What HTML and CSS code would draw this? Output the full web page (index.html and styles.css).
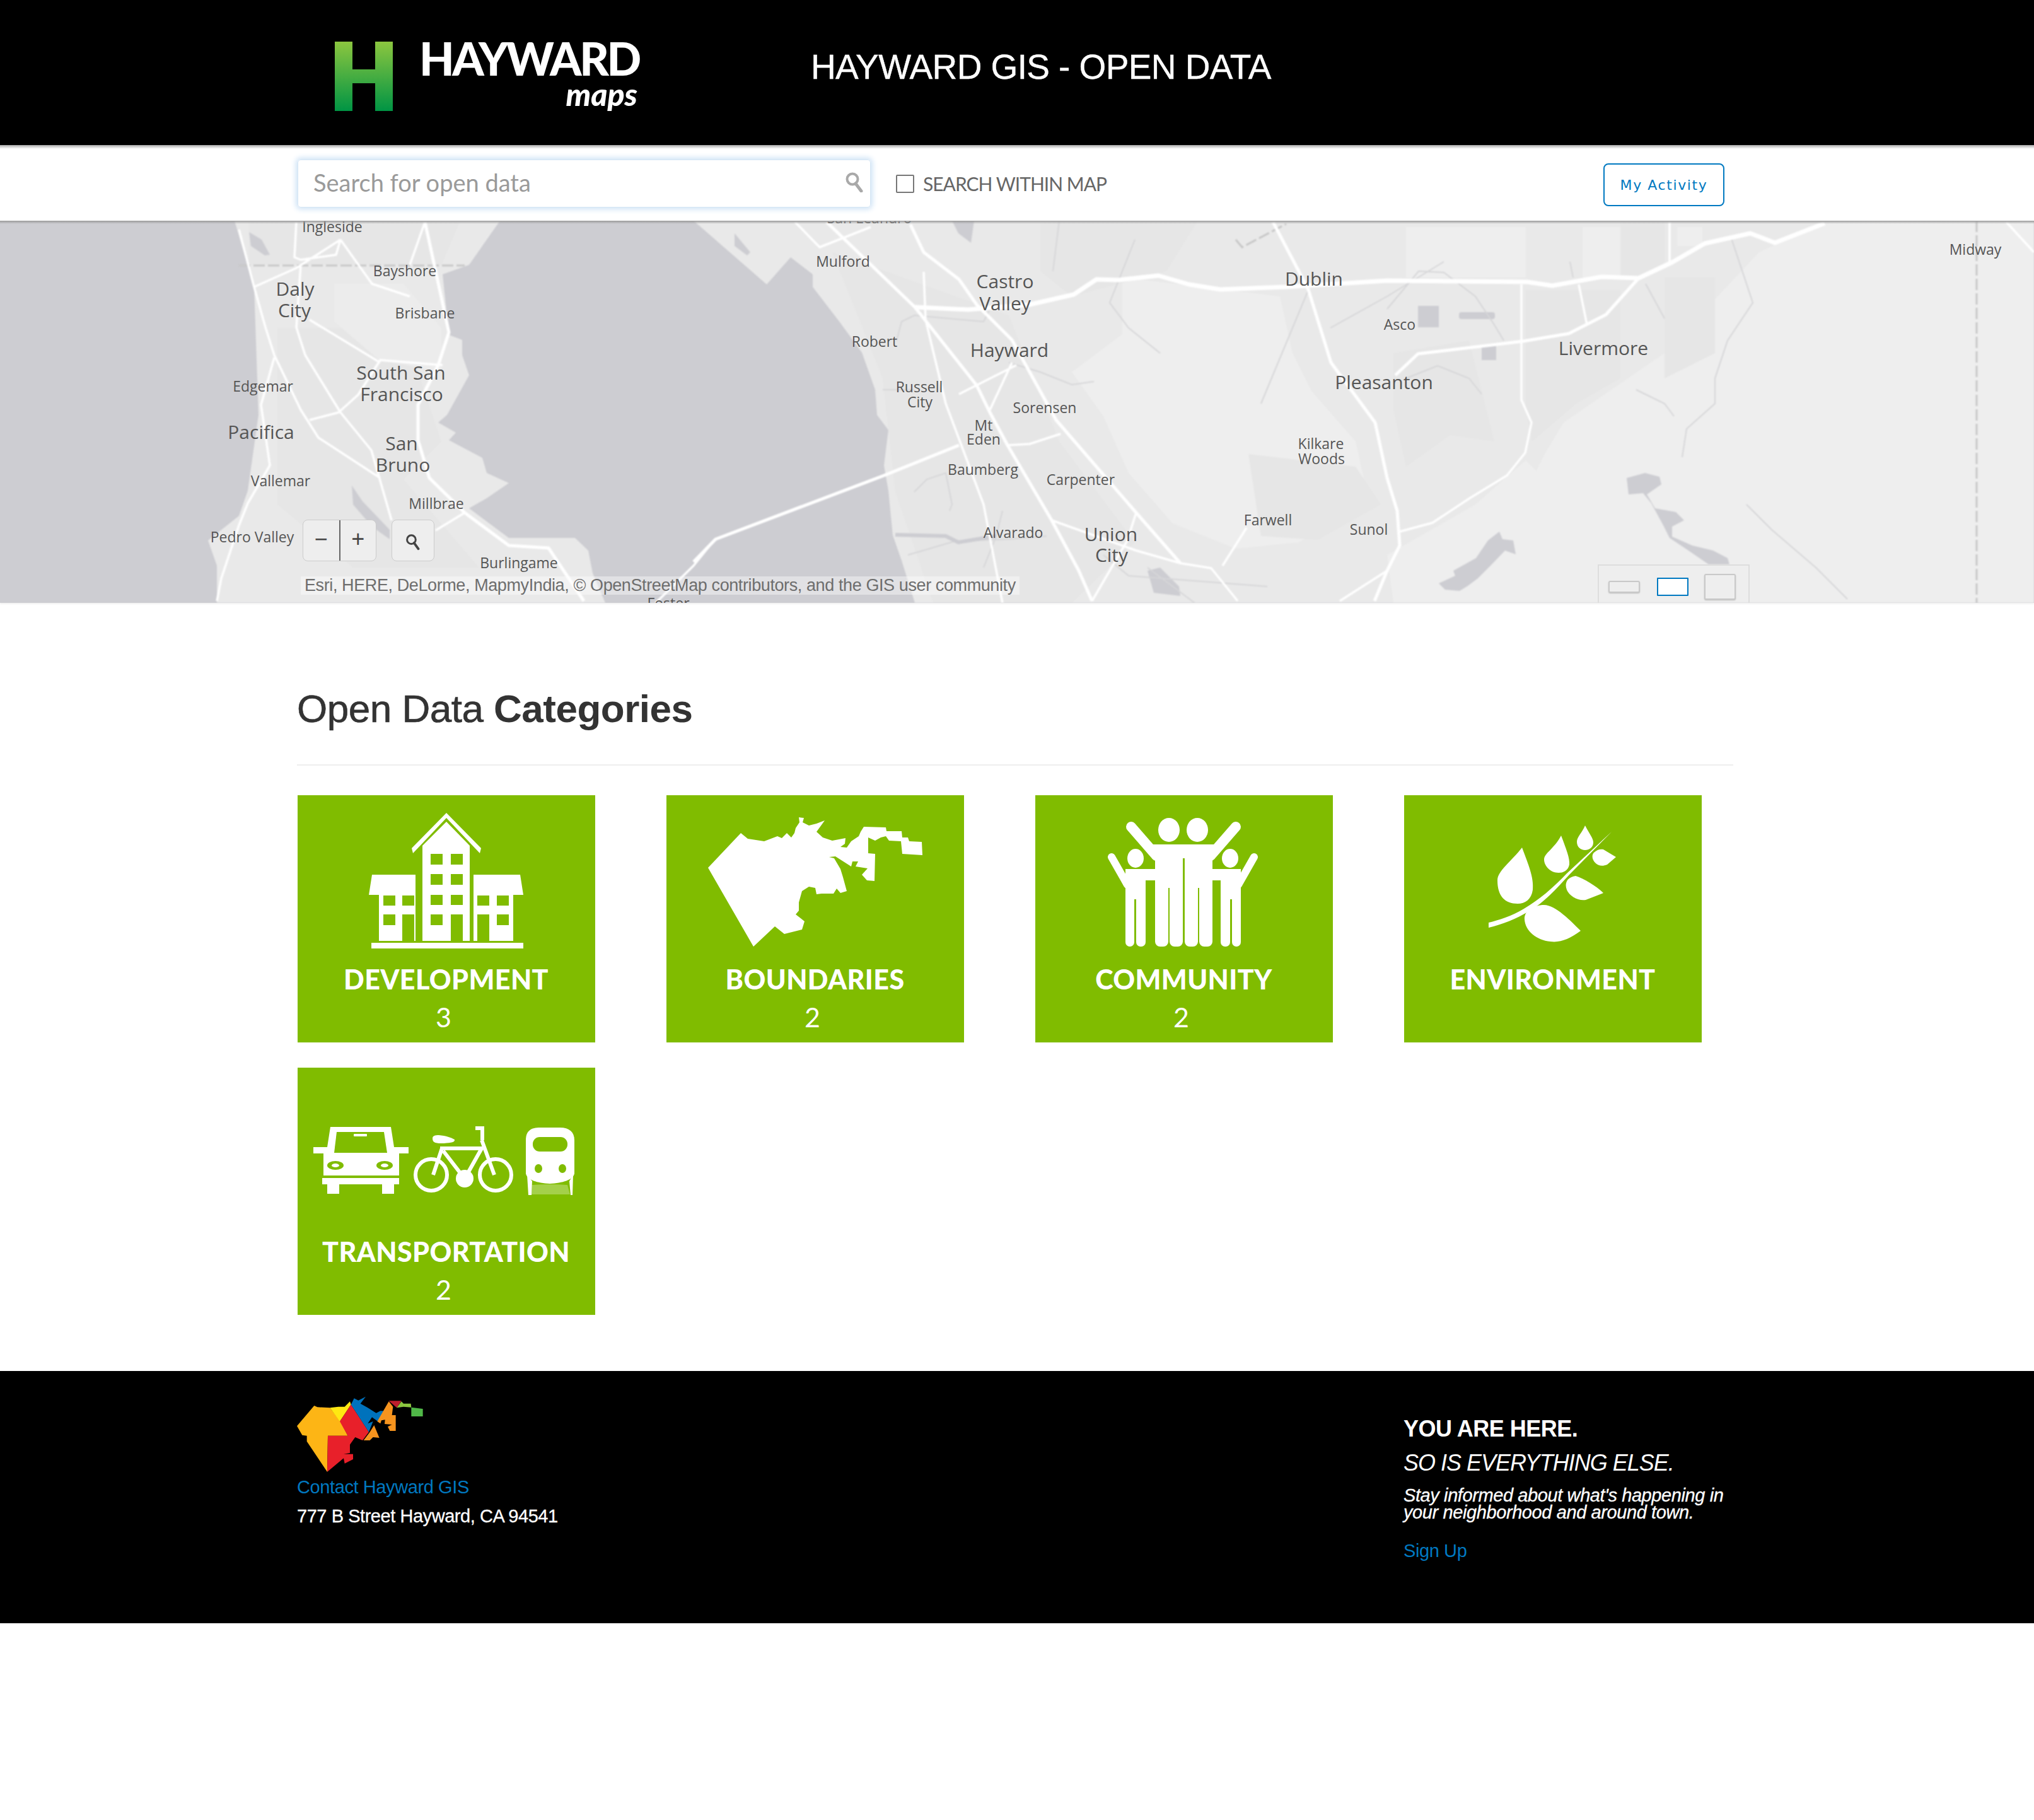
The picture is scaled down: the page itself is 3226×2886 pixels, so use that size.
FILE: index.html
```html
<!DOCTYPE html>
<html lang="en">
<head>
<meta charset="utf-8">
<title>Hayward GIS - Open Data</title>
<link rel="stylesheet" href="styles.css">
</head>
<body>
<header class="topbar">
  <div class="topbar-inner">
    <a class="logo">
      <svg class="logo-h" viewBox="0 0 92 110">
        <defs><linearGradient id="hgrad" x1="0" y1="0" x2="0" y2="1"><stop offset="0" stop-color="#8cc63f"/><stop offset="1" stop-color="#009444"/></linearGradient></defs>
        <path fill="url(#hgrad)" d="M0 0H28V44H64V0H92V110H64V66H28V110H0Z"/>
      </svg>
      <div class="logo-text"><div class="logo-name">HAYWARD</div><div class="logo-sub">maps</div></div>
    </a>
    <h1 class="site-title">HAYWARD GIS - OPEN DATA</h1>
  </div>
</header>

<div class="searchbar">
  <div class="searchbar-inner">
    <div class="searchbox">
      <span class="placeholder">Search for open data</span>
      <svg class="search-icon" viewBox="0 0 28 32"><circle cx="11" cy="11" r="8.5" fill="none" stroke="#a9a9a9" stroke-width="4"/><path d="M16 18L25 30" stroke="#a9a9a9" stroke-width="5" stroke-linecap="round"/></svg>
    </div>
    <label class="within"><span class="checkbox"></span><span>SEARCH WITHIN MAP</span></label>
    <a class="activity">My Activity</a>
  </div>
</div>

<section class="map">
  <svg class="map-canvas" viewBox="0 350 3226 606" preserveAspectRatio="none">
    <rect class="water" x="0" y="350" width="3226" height="606"/>
    <g class="soft">
    <!-- land -->
    <path class="land" d="M372 350L403 455L410 658L393 778L379 818L330 857L344 897L344 956H960L940 909L933 873L912 853H807L744 806L772 790L807 766L772 750L765 726L712 698L723 686L695 670L709 658L744 595L733 563L733 539L712 531L702 435L744 420L793 350Z"/>
    <path class="land" d="M1100 350L1216 451L1254 408L1289 435L1289 455L1332 511L1367 559L1388 618L1391 658L1409 682L1402 738L1409 778L1416 849L1430 889L1451 956H3226V350Z"/>
    <!-- tones -->
    <path class="land-light" d="M1780 440L2030 470L2050 560L2080 620L2150 700L2170 790L2060 860L1960 870L1860 830L1790 750L1750 660L1700 590L1780 530Z"/>
    <path class="land-light" d="M2480 670L2640 560L2790 400L2900 350H3226V956H2300L2400 820L2450 720Z"/>
    <path class="land-light" d="M2200 880L2340 800L2420 730L2470 780L2330 956H2210Z"/>
    <path class="land-light" d="M2230 360H2420V440H2230ZM2510 360H2570V440H2510ZM2660 360H2700V390H2660Z"/>
    <path class="land-dark" d="M2570 350H2640V416L2600 440L2570 440Z"/>
    <path class="land-dark" d="M2420 460H2570V600L2500 640L2430 700L2420 650Z"/>
    <path class="land-dark" d="M2640 440H2720V560L2640 600Z"/>
    <path class="land-dark" d="M2210 560L2330 540L2370 700L2300 690L2230 740L2210 650Z"/>
    <path class="land-dark" d="M1650 350H1900L1850 430L1700 470L1650 430Z"/>
    <path class="land-dark" d="M1980 720L2150 740L2190 800L2090 856L2000 850Z"/>
    <path class="land-dark" d="M1320 400L1600 500L1680 700L1800 860L1700 956H1480L1420 780L1400 600Z"/>
    <path class="land-dark" d="M440 520L640 520L700 700L640 760L760 900L560 900L440 800Z"/>
    <path class="land-dark" d="M395 350H730L700 420H395Z"/>
    <path class="land-lighter" d="M530 450L640 450L700 520L700 590L600 570L530 510Z"/>
    <!-- lakes -->
    <path class="lake" d="M2580 758L2609 750L2632 756L2635 768L2612 784L2625 806L2658 812L2671 825L2652 835L2652 851L2684 865L2717 873L2740 885L2743 895H2710L2678 873L2648 853L2638 833L2619 798L2606 782L2583 784Z"/>
    <path class="lake" d="M2282 925L2308 913L2305 905L2341 885L2360 857L2378 843L2383 855L2400 857L2404 879L2387 873L2364 897L2344 917L2328 929L2315 937L2292 935Z"/>
    <path class="lake" d="M2249 485H2282V519H2249ZM2350 549H2373V571H2350Z"/>
    <rect class="lake" x="2314" y="495" width="57" height="11" rx="4"/>
    <path class="lake" d="M1820 905L1840 900L1870 930L1872 945L1830 940Z"/>
    <path class="lake" d="M1165 370L1190 400L1185 405L1165 390Z"/>
    <path class="lake" d="M395 368L415 380L428 404L420 405L398 390ZM1510 350L1545 350L1540 385L1520 370Z"/>
    <path class="lake" d="M558 770L575 795L618 840L618 855L590 835L560 800Z"/>
    <!-- creeks -->
    <path class="creek" d="M1400 618H1450M1422 540L1430 510L1450 500L1560 510L1570 490M1600 575L1650 590L1700 610L1735 605M1800 380L1760 480L1790 520L1840 560M1680 350L1670 430M1440 880L1515 858L1600 855L1660 850M1820 900L1900 960M1450 780L1470 760L1500 750L1510 800L1506 810M1590 810L1580 850L1560 900M2000 640L2075 460M2110 520L2200 470L2290 415M2200 490L2250 430L2290 432L2340 470L2370 515L2385 540M2230 600L2280 580L2330 600L2350 625M2490 415L2495 440M2610 450L2640 505M2745 375L2770 450L2780 480L2740 540L2720 600L2720 640L2675 680L2668 725M2595 618L2640 640L2655 660M2770 800L2810 840L2880 900L2930 950M1750 880L1790 913L2010 930"/>
    <path class="creek-thick" d="M1420 848L1500 850L1520 860L1580 850"/>
    <!-- boundary lines -->
    <path class="boundary" d="M3135 350V956M379 421H737M1960 380L1970 392L2040 355"/>
    <!-- roads -->
    <path class="road" d="M470 352L467 408L477 412L533 404L540 380M477 420L470 519L484 563L540 654L589 714L621 825M379 364L403 455L421 519L435 563L477 650L505 694L603 758M435 567L414 642L428 738L393 798L379 833L351 917L344 953M491 666L537 654L568 626L603 571L653 575L702 579M491 507L603 575M691 841L737 813M403 455L470 425L540 380M540 380L590 450L650 470M674 352L650 420M1134 855L1100 897L1040 956M1261 352L1300 392L1381 360M1465 431L1468 507L1500 640L1560 800L1590 956M1521 625L1612 579M1605 575L1570 650M1598 706L1633 704L1682 688M1668 825L1802 873L1872 893L1921 901L1963 953M1802 813L1788 857L1732 953M2200 905L2125 953M1939 897L1977 837M2504 451L2517 515M2648 352V416M3182 352L3226 400M2413 451V634L2429 670L2419 718L2390 754L2331 790L2272 829L2220 843"/>
    <path class="road road-major" d="M674 352L712 527L695 579L663 642L663 698L681 758L737 813L807 865L870 869L926 953M1521 706L1402 754L1135 855L1100 891M1311 352L1451 487L1549 611L1570 654L1598 706L1668 825L1711 905L1732 953M1444 356L1465 400L1521 443L1549 483L1605 539L1675 666L1802 813L1872 893M2019 352L2075 459L2111 575L2181 670L2200 758L2216 810L2220 865L2200 905L2180 953M2213 595L2249 561L2416 541L2488 529L2547 499L2599 441"/>
    <path class="road road-wide" d="M1451 487L1535 491L1633 483L1703 467L1739 443L1774 444L1837 437L1886 451L1935 459L2040 455L2200 445L2422 447L2462 453L2540 439L2599 441L2652 416L2704 386L2776 370L2815 385L2894 354"/>
    </g>
    <!-- labels -->
    <g class="labels">
      <text x="527" y="368">Ingleside</text><text x="642" y="438">Bayshore</text>
      <text class="big" x="468" y="469">Daly</text><text class="big" x="467" y="503">City</text>
      <text x="674" y="505">Brisbane</text>
      <text class="big" x="636" y="602">South San</text><text class="big" x="637" y="636">Francisco</text>
      <text x="417" y="621">Edgemar</text><text class="big" x="414" y="696">Pacifica</text>
      <text class="big" x="637" y="714">San</text><text class="big" x="639" y="748">Bruno</text>
      <text x="445" y="771">Vallemar</text><text x="692" y="807">Millbrae</text>
      <text x="400" y="860">Pedro Valley</text><text x="823" y="901">Burlingame</text><text x="1060" y="965">Foster</text>
      <text x="1379" y="354">San Leandro</text><text x="1337" y="423">Mulford</text>
      <text class="big" x="1594" y="457">Castro</text><text class="big" x="1594" y="492">Valley</text>
      <text x="1387" y="550">Robert</text><text class="big" x="1601" y="566">Hayward</text>
      <text x="1458" y="622">Russell</text><text x="1459" y="646">City</text>
      <text x="1657" y="655">Sorensen</text><text x="1560" y="683">Mt</text><text x="1560" y="705">Eden</text>
      <text x="1559" y="753">Baumberg</text><text x="1714" y="769">Carpenter</text><text x="1607" y="853">Alvarado</text>
      <text class="big" x="1762" y="858">Union</text><text class="big" x="1763" y="891">City</text>
      <text x="2011" y="833">Farwell</text><text x="2171" y="848">Sunol</text>
      <text class="big" x="2084" y="453">Dublin</text><text x="2095" y="712">Kilkare</text><text x="2096" y="736">Woods</text>
      <text class="big" x="2195" y="617">Pleasanton</text><text x="2220" y="523">Asco</text>
      <text class="big" x="2543" y="563">Livermore</text><text x="3133" y="404">Midway</text>
    </g>
  </svg>
  <div class="zoom-controls">
    <div class="zoom-pair"><span class="zoom-btn">−</span><span class="zoom-btn zoom-plus">+</span></div>
    <div class="zoom-find">
      <svg viewBox="0 0 28 32" class="find-icon"><circle cx="11" cy="11" r="8" fill="none" stroke="#444" stroke-width="3.5"/><path d="M16 17L24 28" stroke="#444" stroke-width="4.5" stroke-linecap="round"/></svg>
    </div>
  </div>
  <div class="attribution">Esri, HERE, DeLorme, MapmyIndia, © OpenStreetMap contributors, and the GIS user community</div>
  <div class="extent">
    <span class="ext ext-a"></span><span class="ext ext-b"></span><span class="ext ext-c"></span>
  </div>
</section>

<main class="categories">
  <h2 class="cat-title">Open Data <strong>Categories</strong></h2>
  <div class="cat-grid">
    <a class="card">
      <svg class="card-art" viewBox="0 0 472 270">
        <path class="w" d="M236 28L291 84L289 92L236 36L183 92L181 84Z"/>
        <path class="w" d="M236 42L273 80V231H198V80Z"/>
        <path class="w" d="M118 126H187V158H113Z"/><path class="w" d="M279 126H353L358 158H279Z"/>
        <rect class="w" x="129" y="158" width="58" height="73"/><rect class="w" x="279" y="158" width="63" height="73"/>
        <rect class="w" x="117" y="234" width="241" height="9"/>
        <path class="g" d="M211 93h19v17h-19zM243 93h19v17h-19zM211 125h19v17h-19zM243 125h19v17h-19zM211 158h19v16h-19zM243 158h19v16h-19zM211 189h19v17h-19zM243 189h19v42h-19zM136 159h19v16h-19zM166 159h19v16h-19zM136 189h19v17h-19zM166 189h19v42h-19zM285 159h19v16h-19zM316 159h19v16h-19zM285 189h19v42h-19zM316 189h19v17h-19z"/>
      </svg>
      <span class="card-name">DEVELOPMENT</span><span class="card-count">3</span>
    </a>
    <a class="card">
      <svg class="card-art" viewBox="0 0 472 270">
        <path class="w" d="M66 115L118 60L129 69L155 73L176 65L183 68L191 60L198 67L203 60L205 52L211 43L210 35L218 36L216 43L226 48L238 45L251 40L246 47L238 58L248 67L263 72L284 68L283 77L276 82L286 83L293 73L305 65L308 58L313 50L348 51L349 57L373 57L374 67L383 67L385 73L405 74L406 95L374 93L372 73L353 72L348 65L340 67L331 72L320 67L320 92L331 93L330 136L318 135L310 126L319 116L300 113L304 105L295 105L293 113L268 97L258 98L266 100L276 117L280 130L286 152L276 155L270 148L265 156L246 156L238 157L236 147L226 145L215 152L210 170L210 183L205 189L219 200L215 213L187 220L172 208L138 240Z"/>
      </svg>
      <span class="card-name">BOUNDARIES</span><span class="card-count">2</span>
    </a>
    <a class="card">
      <svg class="card-art" viewBox="0 0 472 270">
        <ellipse class="w" cx="212" cy="55" rx="17" ry="19"/><ellipse class="w" cx="257" cy="55" rx="17" ry="19"/>
        <ellipse class="w" cx="159" cy="100" rx="13" ry="15"/><ellipse class="w" cx="309" cy="100" rx="13" ry="15"/>
        <path class="limb-l" d="M152 50L192 96M318 50L278 96"/>
        <path class="limb-s" d="M121 98L146 142M347 98L322 142"/>
        <path class="w" d="M186 78H284L281 100V150H190V100Z"/>
        <path class="w" d="M143 117H190V135H175V165H143ZM281 117H326V165H294V135H281Z"/>
        <rect class="w" x="143" y="150" width="14" height="90" rx="7"/><rect class="w" x="160" y="150" width="15" height="90" rx="7"/>
        <rect class="w" x="190" y="135" width="21" height="105" rx="8"/><rect class="w" x="213" y="135" width="21" height="105" rx="8"/>
        <rect class="w" x="237" y="135" width="21" height="105" rx="8"/><rect class="w" x="260" y="135" width="21" height="105" rx="8"/>
        <rect class="w" x="294" y="150" width="15" height="90" rx="7"/><rect class="w" x="312" y="150" width="14" height="90" rx="7"/>
        <path class="g" d="M234 100h3v60h-3zM211 147h2v20h-2zM258 147h2v20h-2zM157 170h3v20h-3zM309 170h3v20h-3z"/>
      </svg>
      <span class="card-name">COMMUNITY</span><span class="card-count">2</span>
    </a>
    <a class="card">
      <svg class="card-art" viewBox="0 0 472 270">
        <path class="w" d="M187 83C197 110 206 130 204 150C202 165 192 172 180 172C160 172 148 160 148 135C148 120 170 105 187 83Z"/>
        <path class="w" d="M249 64C257 85 263 100 262 110C260 120 252 123 245 123C232 123 222 112 222 102C222 92 238 85 249 64Z"/>
        <path class="w" d="M287 48C293 60 300 68 300 75C300 83 293 87 287 87C280 87 274 82 274 74C274 66 282 60 287 48Z"/>
        <path class="w" d="M316 86L336 98L322 110C315 113 308 112 304 108C298 103 297 95 301 91C306 86 311 85 316 86Z"/>
        <path class="w" d="M272 128C285 132 306 145 316 155L288 166C276 168 262 160 258 150C254 140 258 130 272 128Z"/>
        <path class="w" d="M222 174C240 174 265 200 280 215C262 228 248 234 232 232C210 230 192 215 191 197C190 183 205 174 222 174Z"/>
        <path class="w" d="M329 58L258 124C235 148 215 165 190 180C170 192 150 198 134 202V210C155 205 178 196 198 184C222 170 240 150 262 126Z"/>
      </svg>
      <span class="card-name">ENVIRONMENT</span>
    </a>
    <a class="card">
      <svg class="card-art" viewBox="0 0 472 270">
        <path class="w" d="M52 94H148L153 126H176V136H161V171H41V136H25V126H47Z"/>
        <path class="g" d="M62 102H137L142 135H58Z"/>
        <rect class="w" x="89" y="105" width="21" height="4" rx="1"/>
        <ellipse class="g" cx="60" cy="155" rx="13" ry="7"/><ellipse class="w" cx="60" cy="155" rx="6" ry="3"/>
        <ellipse class="g" cx="138" cy="155" rx="13" ry="7"/><ellipse class="w" cx="138" cy="155" rx="6" ry="3"/>
        <rect class="w" x="39" y="175" width="122" height="10"/><rect class="w" x="47" y="185" width="19" height="15"/><rect class="w" x="134" y="185" width="19" height="15"/>
        <circle class="line" cx="212" cy="170" r="25"/><circle class="line" cx="314" cy="170" r="25"/>
        <circle class="w" cx="265" cy="176" r="14"/>
        <path class="line" d="M226 128H292L265 176L231 132M229 128L215 170M292 115L312 170M293 97V115M282 96H296"/>
        <path class="w" d="M214 112C214 108 218 107 224 107C235 108 244 111 249 114C250 118 244 119 232 120C220 120 214 120 214 112Z"/>
        <path class="w" d="M362 115C362 100 370 95 385 95H416C431 95 439 102 439 115V168C437 178 420 183 400 184C380 183 364 178 362 168Z"/>
        <rect class="g" x="373" y="110" width="55" height="23" rx="11"/>
        <ellipse class="g" cx="382" cy="160" rx="6" ry="7"/><ellipse class="g" cx="420" cy="160" rx="6" ry="7"/>
        <path class="lime" d="M372 186Q400 184 428 186L432 201H371Z"/>
        <path class="w" d="M364 170L372 180L371 202H366ZM437 170L431 180L433 202H436Z"/>
      </svg>
      <span class="card-name">TRANSPORTATION</span><span class="card-count">2</span>
    </a>
  </div>
</main>

<footer class="footer">
  <div class="footer-inner">
    <div class="footer-left">
      <svg class="footer-logo" viewBox="0 0 202 124">
        <g transform="scale(.3333) translate(-93 -130)">
          <path fill="#fdb515" d="M93 272L175 175L190 182L250 185L300 250L335 318H240L237 490L140 345V318L118 315Z"/>
          <path fill="#ffe812" d="M250 185L290 180L320 180L345 155L350 170L297 250Z"/>
          <path fill="#e8202a" d="M350 170L435 300L405 340L370 325L345 360V400L315 405L360 405V430L320 450L315 425L237 490L240 318H335L297 250Z"/>
          <path fill="#0072bc" d="M350 170L365 140L385 150L420 132L395 165L430 185L470 210L490 200H505L478 250L450 230L430 260L455 250L435 300Z"/>
          <path fill="#f7941e" d="M530 155L550 180L545 220H563V295H535L525 275L545 265L510 262L512 242L495 245L490 260L475 250ZM460 268L485 328L455 325L440 340L410 340L440 300Z"/>
          <path fill="#be1e2d" d="M530 152H590L568 185Z"/>
          <path fill="#8dc63f" d="M568 185L590 155L600 165H635L637 183L600 180Z"/>
          <path fill="#50b848" d="M637 183L692 190V226H637Z"/>
        </g>
      </svg>
      <a class="footer-link contact">Contact Hayward GIS</a>
      <p class="address">777 B Street Hayward, CA 94541</p>
    </div>
    <div class="footer-right">
      <p class="here">YOU ARE HERE.</p>
      <p class="else">SO IS EVERYTHING ELSE.</p>
      <p class="stay">Stay informed about what's happening in<br>your neighborhood and around town.</p>
      <a class="footer-link signup">Sign Up</a>
    </div>
  </div>
</footer>
</body>
</html>
```

FILE: styles.css
```css
* { box-sizing: border-box; }
html, body { margin: 0; padding: 0; background: #fff; }
body { font-family: "Liberation Sans", Arial, sans-serif; width: 3226px; min-height: 2886px; }
h1, h2, p { margin: 0; font-weight: normal; }

.topbar { background: #000; height: 230px; }
.topbar-inner { margin-left: 531px; padding-top: 66px; display: flex; align-items: flex-start; }
.logo { display: flex; gap: 42px; width: 757px; }
.logo-h { width: 92px; height: 110px; flex: none; }
.logo-text { width: 346px; text-align: right; color: #fff; font-family: Lato, sans-serif; font-weight: 900; }
.logo-name { font-size: 72px; line-height: 52px; letter-spacing: -3.4px; white-space: nowrap; }
.logo-sub { font-size: 50px; line-height: 42px; font-style: italic; margin-top: 10px; }
.site-title { color: #fff; font-size: 55px; line-height: 60px; padding-top: 10px; margin-left: -2px; white-space: nowrap; letter-spacing: -.6px; -webkit-text-stroke: .4px #fff; }

.searchbar { height: 120px; background: #fff; position: relative; }
.searchbar::before { content: ""; position: absolute; left: 0; right: 0; top: 0; height: 6px; background: linear-gradient(#aaa, rgba(170,170,170,0)); }
.searchbar-inner { display: flex; align-items: center; margin-left: 472px; width: 2263px; height: 120px; padding-top: 2px; }
.searchbox { width: 909px; height: 76px; border: 1px solid #d6e6f4; border-radius: 5px; box-shadow: 0 0 8px 3px #cfe3f6; padding: 0 11px 4px 24px; display: flex; align-items: center; justify-content: space-between; }
.placeholder { font-family: Lato, sans-serif; font-size: 38px; color: #9a9a9a; }
.search-icon { width: 28px; height: 32px; }
.within { display: flex; align-items: center; gap: 14px; margin-left: 40px; font-family: Lato, sans-serif; font-size: 30px; letter-spacing: -1px; color: #666; }
.checkbox { width: 29px; height: 29px; border: 2px solid #777; border-radius: 2px; }
.activity { margin-left: auto; margin-top: 4px; width: 192px; height: 68px; border: 2px solid #0079c1; border-radius: 8px; color: #0079c1; font-family: "DejaVu Sans", sans-serif; font-size: 22px; letter-spacing: 1.6px; display: flex; align-items: center; justify-content: center; }

.map { position: relative; height: 606px; overflow: hidden; box-shadow: 0 2px 2px #f2f2f2; }
.map::before { content: ""; position: absolute; left: 0; right: 0; top: 0; height: 5px; background: linear-gradient(#999, rgba(153,153,153,0)); }
.map-canvas { display: block; width: 3226px; height: 606px; }
.soft { filter: blur(.8px); }
.water { fill: #cdcdd2; }
.land { fill: #e9e9e9; }
.land-light { fill: #eeeeee; }
.land-lighter { fill: #ececec; }
.land-dark { fill: #e6e6e6; }
.lake { fill: #cdcdd2; }
.creek { fill: none; stroke: #d6d6d8; stroke-width: 2; }
.creek-thick { fill: none; stroke: #cdcdd2; stroke-width: 6; }
.boundary { fill: none; stroke: #c8c8c8; stroke-width: 3; stroke-dasharray: 18 5; }
.road { fill: none; stroke: #fff; stroke-width: 3.5; stroke-linejoin: round; }
.road-major { stroke-width: 5; }
.road-wide { stroke-width: 7; }
.labels text { font-family: "Open Sans", sans-serif; font-size: 23px; fill: #555; text-anchor: middle; }
.labels .big { font-size: 30px; }

.zoom-controls { position: absolute; left: 480px; top: 474px; display: flex; gap: 24px; }
.zoom-pair { display: flex; width: 117px; height: 66px; background: #eee; border: 1px solid #ccc; border-radius: 8px; }
.zoom-btn { flex: 1; display: flex; align-items: center; justify-content: center; font-size: 36px; color: #444; padding-bottom: 4px; }
.zoom-plus { border-left: 2px solid #666; }
.zoom-find { width: 68px; height: 66px; background: #eee; border: 1px solid #ccc; border-radius: 8px; display: flex; align-items: center; justify-content: center; padding-top: 6px; }
.find-icon { width: 24px; height: 28px; }
.attribution { position: absolute; left: 477px; top: 564px; height: 29px; line-height: 29px; padding: 0 6px; background: rgba(255,255,255,.4); color: #6e6e6e; font-size: 27px; letter-spacing: -.4px; white-space: nowrap; }
.extent { position: absolute; left: 2534px; top: 545px; width: 241px; height: 61px; border: 2px solid #ddd; border-bottom: 0; display: flex; align-items: center; padding: 7px 0 0 15px; }
.ext { display: block; width: 50px; border-radius: 3px; }
.ext-a { height: 19px; background: #eee; border: 2px solid #c9c9c9; box-shadow: 0 1px 2px #bbb; margin-right: 27px; }
.ext-b { height: 29px; background: #fff; border: 2px solid #0079c1; border-radius: 1px; margin-right: 25px; }
.ext-c { height: 41px; background: #eee; border: 2px solid #c9c9c9; box-shadow: 0 1px 2px #bbb; }

.categories { margin-left: 471px; padding-top: 128px; width: 2278px; height: 1218px; }
.cat-title { font-size: 62px; line-height: 80px; color: #333; padding-bottom: 48px; border-bottom: 2px solid #eee; letter-spacing: -.5px; -webkit-text-stroke: .6px #333; }
.cat-title strong { font-weight: bold; -webkit-text-stroke: 0; }
.cat-grid { display: grid; grid-template-columns: repeat(4, 472px); column-gap: 113px; row-gap: 40px; margin-top: 47px; margin-left: .5px; }
.card { height: 392px; background: #80bc00; color: #fff; display: flex; flex-direction: column; align-items: center; }
.card-art { display: block; width: 472px; height: 270px; flex: none; }
.w { fill: #fff; }
.g { fill: #80bc00; }
.lime { fill: #a4d04a; }
.line { fill: none; stroke: #fff; stroke-width: 6; }
.limb-l { fill: none; stroke: #fff; stroke-width: 16; stroke-linecap: round; }
.limb-s { fill: none; stroke: #fff; stroke-width: 12; stroke-linecap: round; }
.card-name { font-family: Lato, sans-serif; font-weight: 900; font-size: 43px; line-height: 44px; letter-spacing: .4px; white-space: nowrap; }
.card-count { font-family: Lato, sans-serif; font-size: 43px; line-height: 44px; margin-top: 16px; margin-right: 8px; }

.footer { background: #000; height: 400px; color: #fff; }
.footer-inner { margin-left: 471px; width: 2278px; display: flex; justify-content: space-between; }
.footer-left { padding-top: 40px; }
.footer-logo { display: block; width: 202px; height: 124px; }
.footer-link { color: #0079c1; font-size: 29px; letter-spacing: -.4px; }
.contact { display: block; line-height: 36px; margin-top: 2px; }
.address { font-size: 29px; letter-spacing: -.45px; line-height: 36px; margin-top: 10px; -webkit-text-stroke: .3px #fff; }
.footer-right { width: 523px; padding-top: 70px; font-style: italic; margin-left: -2px; }
.here { font-size: 36px; letter-spacing: -.5px; line-height: 44px; font-weight: bold; font-style: normal; }
.else { font-size: 36px; letter-spacing: -1px; line-height: 44px; margin-top: 10px; }
.stay { font-size: 29px; letter-spacing: -.4px; line-height: 27px; margin-top: 16px; -webkit-text-stroke: .3px #fff; white-space: nowrap; }
.signup { display: block; font-style: normal; line-height: 36px; margin-top: 29px; }
```
